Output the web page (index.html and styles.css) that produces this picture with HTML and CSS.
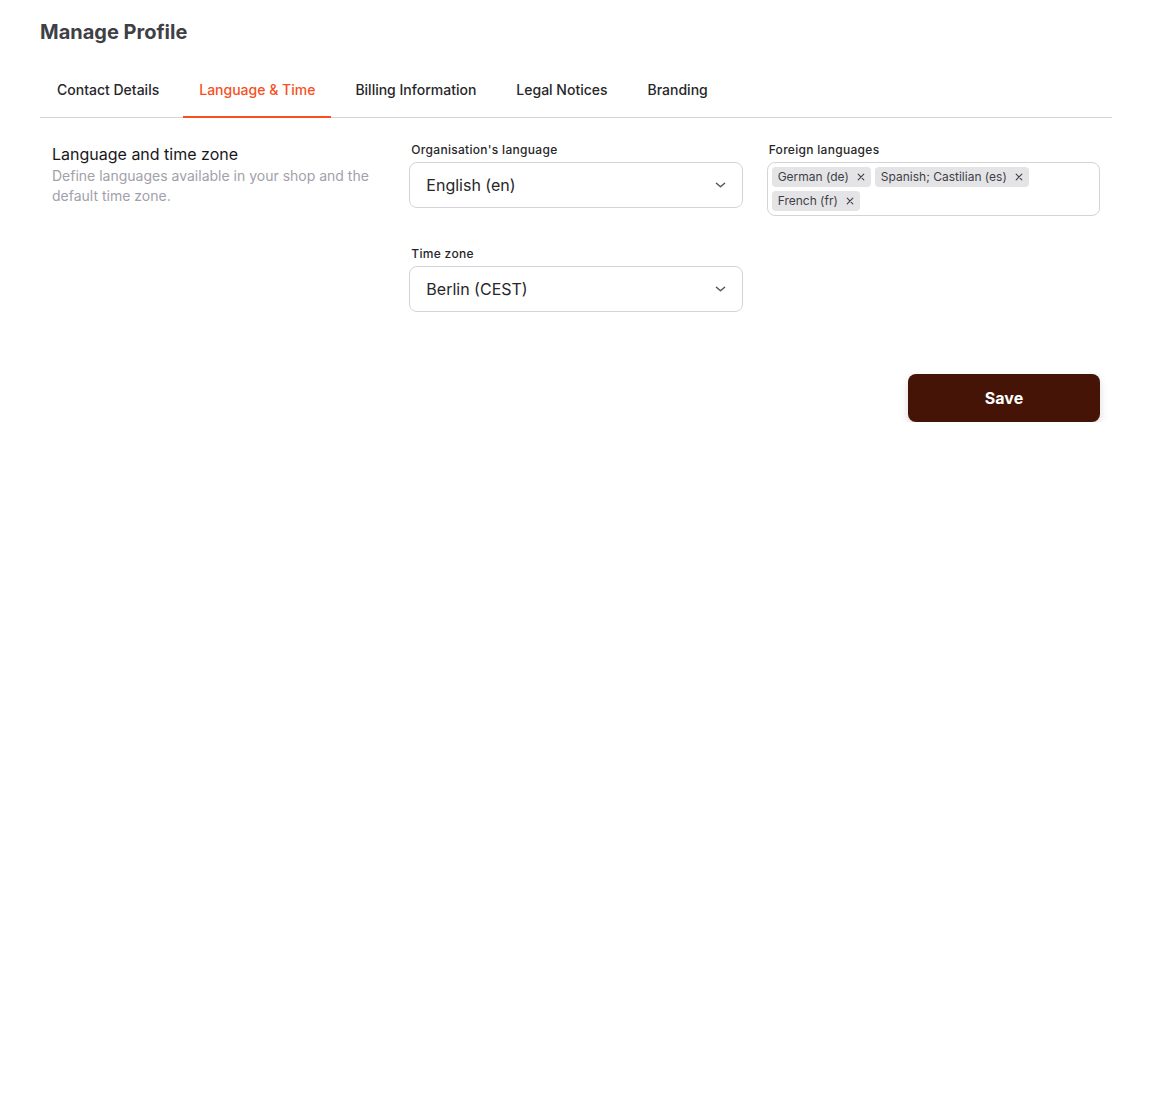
FILE: index.html
```html
<!DOCTYPE html>
<html lang="en">
<head>
<meta charset="utf-8">
<title>Manage Profile</title>
<link rel="stylesheet" href="styles.css">
</head>
<body>
<div class="page">
  <h1 class="title">Manage Profile</h1>
  <nav class="tabs">
    <a class="tab">Contact Details</a>
    <a class="tab active">Language &amp; Time</a>
    <a class="tab">Billing Information</a>
    <a class="tab">Legal Notices</a>
    <a class="tab">Branding</a>
  </nav>
  <section class="content">
    <div class="intro">
      <h2 class="intro-title">Language and time zone</h2>
      <p class="intro-desc">Define languages available in your shop and the default time zone.</p>
    </div>
    <div class="field">
      <label class="label">Organisation's language</label>
      <div class="select">
        <span>English (en)</span>
        <svg class="chev" width="12" height="8" viewBox="0 0 12 8"><path d="M1.5 2 L6 6 L10.5 2" fill="none" stroke="#52525b" stroke-width="1.5" stroke-linecap="round" stroke-linejoin="round"/></svg>
      </div>
    </div>
    <div class="field">
      <label class="label">Foreign languages</label>
      <div class="multi">
        <span class="chip">German (de)<svg class="x" width="8" height="8" viewBox="0 0 8 8"><path d="M1.2 1.2 L6.8 6.8 M6.8 1.2 L1.2 6.8" stroke="#3f3f46" stroke-width="1.1" stroke-linecap="round"/></svg></span>
        <span class="chip">Spanish; Castilian (es)<svg class="x" width="8" height="8" viewBox="0 0 8 8"><path d="M1.2 1.2 L6.8 6.8 M6.8 1.2 L1.2 6.8" stroke="#3f3f46" stroke-width="1.1" stroke-linecap="round"/></svg></span>
        <span class="chip">French (fr)<svg class="x" width="8" height="8" viewBox="0 0 8 8"><path d="M1.2 1.2 L6.8 6.8 M6.8 1.2 L1.2 6.8" stroke="#3f3f46" stroke-width="1.1" stroke-linecap="round"/></svg></span>
      </div>
    </div>
    <div class="field tz">
      <label class="label">Time zone</label>
      <div class="select">
        <span>Berlin (CEST)</span>
        <svg class="chev" width="12" height="8" viewBox="0 0 12 8"><path d="M1.5 2 L6 6 L10.5 2" fill="none" stroke="#52525b" stroke-width="1.5" stroke-linecap="round" stroke-linejoin="round"/></svg>
      </div>
    </div>
    <div class="actions">
      <button class="save">Save</button>
    </div>
  </section>
</div>
</body>
</html>
```
FILE: styles.css
```css
* { box-sizing: border-box; }
html, body { margin: 0; padding: 0; background: #fff; }
body { font-family: Inter, "Noto Sans", sans-serif; color: #18181b; }
.page { padding: 18px 40px 0; }
.title {
  margin: 0;
  font-size: 20px;
  line-height: 28px;
  font-weight: 700;
  color: #3f3f46;
}
.tabs {
  display: flex;
  gap: 8px;
  margin-top: 20px;
  padding-left: 1px;
  border-bottom: 1px solid #d4d4d8;
}
.tab {
  padding: 14px 16px 16px;
  font-size: 14px;
  line-height: 20px;
  font-weight: 500;
  color: #27272a;
  border-bottom: 2px solid transparent;
  margin-bottom: -1px;
}
.tab.active { color: #f4511e; border-bottom-color: #f4511e; }
.content {
  display: grid;
  grid-template-columns: repeat(3, 1fr);
  column-gap: 24px;
  row-gap: 30px;
  padding: 24px 12px 0;
  align-items: start;
}
.intro { grid-row: 1 / span 2; }
.intro-title {
  margin: 0;
  font-size: 16px;
  line-height: 24px;
  font-weight: 400;
  color: #18181b;
}
.intro-desc {
  margin: 0;
  font-size: 14px;
  line-height: 20px;
  color: #a1a1aa;
}
.tz { grid-column: 2; }
.label {
  display: block;
  font-size: 12px;
  line-height: 16px;
  font-weight: 500;
  letter-spacing: 0.3px;
  color: #27272a;
  padding-left: 2px;
  margin-bottom: 4px;
}
.select {
  height: 46px;
  border: 1px solid #d4d4d8;
  border-radius: 8px;
  display: flex;
  align-items: center;
  justify-content: space-between;
  padding: 0 16px 0 16px;
  font-size: 16px;
  color: #27272a;
}
.chev { width: 11px; }
.multi {
  border: 1px solid #d4d4d8;
  border-radius: 8px;
  padding: 4px;
  display: flex;
  flex-wrap: wrap;
  gap: 4px;
}
.chip {
  display: inline-flex;
  align-items: center;
  height: 20px;
  padding: 0 6px 1px;
  gap: 8px;
  background: #e4e4e7;
  border-radius: 4px;
  font-size: 12px;
  line-height: 16px;
  color: #3f3f46;
}
.actions {
  grid-column: 3;
  grid-row: 3;
  display: flex;
  justify-content: flex-end;
  margin-top: 32px;
}
.save {
  width: 192px;
  height: 48px;
  border: none;
  border-radius: 8px;
  background: #451407;
  color: #fff;
  font-family: Inter, sans-serif;
  font-size: 16px;
  font-weight: 700;
  box-shadow: 0 4px 8px rgba(0,0,0,0.15);
}
```
